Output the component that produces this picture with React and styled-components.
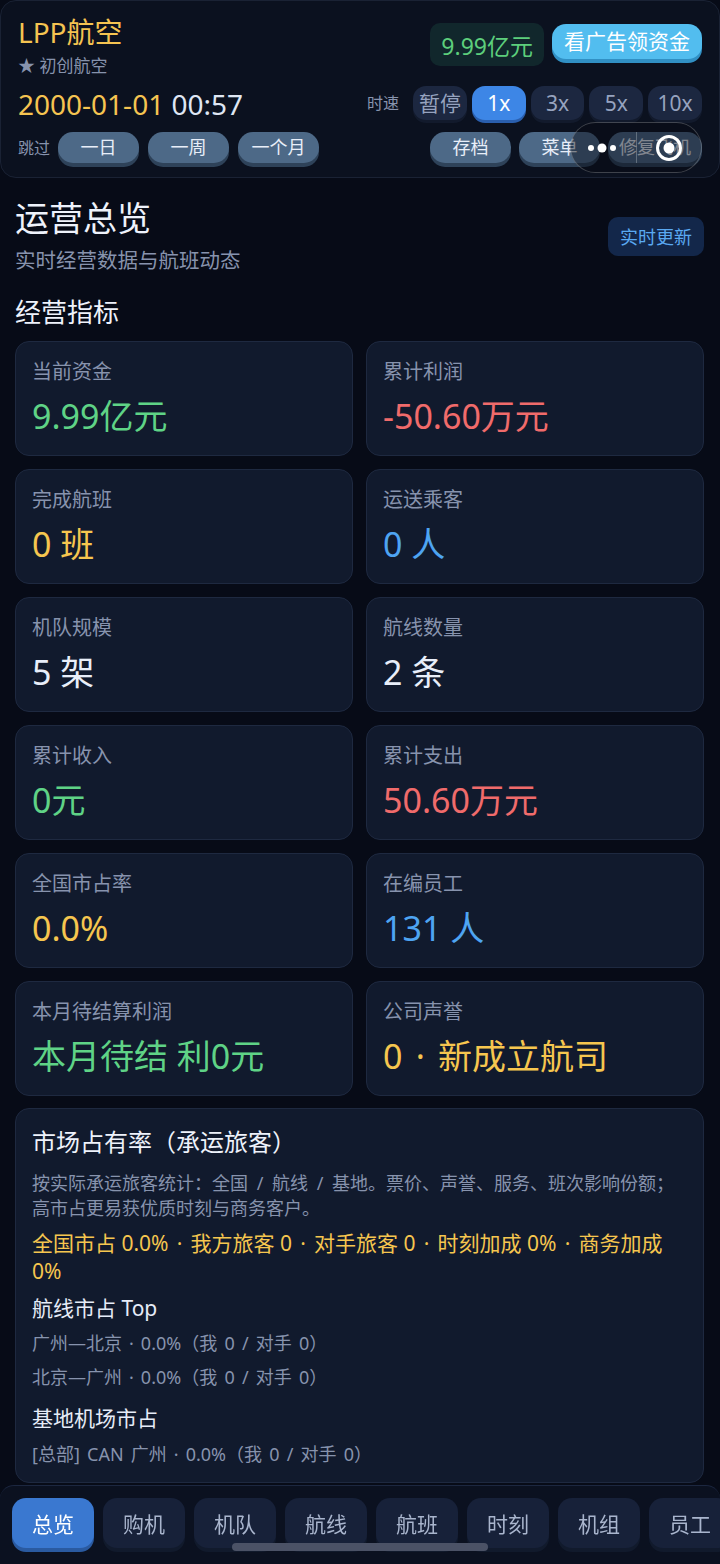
import React from 'react';
import styled, { createGlobalStyle } from 'styled-components';

const GlobalStyle = createGlobalStyle`
  html, body { margin: 0; padding: 0; background: #070b17; }
  body {
    font-family: "Noto Sans", "Noto Sans CJK SC", sans-serif;
    color: #e6ecf8;
    -webkit-font-smoothing: antialiased;
  }
  * { box-sizing: border-box; }
`;

const tones = {
  green: '#5fd386',
  red: '#f06b6b',
  yellow: '#f6c64f',
  blue: '#4ea4f2',
  white: '#e8eef9',
};

const Page = styled.div`
  background: #070b17;
  min-height: 1564px;
  padding-bottom: 90px;
`;

const Sep = styled.span`
  margin: 0 0.39em;
`;

/* ---------- Header ---------- */
const Header = styled.header`
  display: flex;
  justify-content: space-between;
  padding: 14px 17px 14px 17px;
  background: #0b111f;
  border: 1px solid #1a2234;
  border-radius: 16px;
`;

const LeftCol = styled.div`
  display: flex;
  flex-direction: column;
`;

const Brand = styled.div`
  font-size: 28px;
  line-height: 34px;
  color: #f5c451;
`;

const Tier = styled.div`
  margin-top: 6px;
  font-size: 17px;
  line-height: 22px;
  color: #8793ad;
`;

const Clock = styled.div`
  margin-top: 10px;
  font-size: 28px;
  line-height: 34px;
  color: #f5c451;
  span { color: #dfe6f3; }
`;

const ControlRow = styled.div`
  display: flex;
  align-items: ${p => p.$align || 'center'};
  gap: ${p => p.$gap || 8}px;
  margin-top: ${p => p.$top || 0}px;
`;

const RowLabel = styled.span`
  font-size: 16px;
  line-height: 22px;
  color: #8793ad;
  margin-right: ${p => p.$space || 0}px;
`;

const SlabButton = styled.button`
  min-width: 81px;
  height: 31px;
  padding: 0 11px;
  border: none;
  border-radius: 15px;
  background: #4d6987;
  color: #e8eef8;
  font-family: inherit;
  font-size: 18px;
  line-height: 31px;
  box-shadow: 0 4px 0 #2e4259;
  cursor: pointer;
`;

const RightCol = styled.div`
  display: flex;
  flex-direction: column;
  align-items: flex-end;
`;

const MoneyPill = styled.div`
  height: 43px;
  padding: 0 11px;
  display: flex;
  align-items: center;
  background: #11272c;
  color: #5dcf7c;
  font-size: 23px;
  border-radius: 10px;
`;

const AdButton = styled.button`
  height: 35px;
  margin-top: 1px;
  padding: 0 12px;
  border: none;
  border-radius: 14px;
  background: #52bdef;
  color: #ffffff;
  font-family: inherit;
  font-size: 21px;
  line-height: 35px;
  box-shadow: 0 4px 0 #3190c4;
`;

const SpeedGroup = styled.div`
  display: flex;
  gap: 5px;
  width: 289px;
`;

const SpeedButton = styled.button`
  flex: 1 1 0;
  height: 34px;
  padding: 0;
  border: none;
  border-radius: 13px;
  background: ${p => (p.$active ? '#3d86e6' : '#1c2740')};
  color: ${p => (p.$active ? '#ffffff' : '#96a3bf')};
  font-family: inherit;
  font-size: 21px;
  line-height: 34px;
  box-shadow: 0 3px 0 ${p => (p.$active ? '#2a5fae' : '#121a2c')};
`;

/* ---------- WeChat capsule overlay ---------- */
const Capsule = styled.div`
  position: fixed;
  top: 122px;
  right: 18px;
  width: 132px;
  height: 51px;
  border-radius: 26px;
  background: rgba(6, 9, 18, 0.45);
  border: 1px solid rgba(255, 255, 255, 0.22);
  display: flex;
  align-items: center;
`;

const CapsuleHalf = styled.div`
  flex: 1;
  height: 100%;
  display: flex;
  align-items: center;
  justify-content: center;
`;

const CapsuleDivider = styled.div`
  width: 1px;
  height: 31px;
  background: rgba(255, 255, 255, 0.25);
`;

/* ---------- Main ---------- */
const Main = styled.main`
  padding: 20px 16px 0 15px;
`;

const OverviewHead = styled.div`
  display: flex;
  justify-content: space-between;
  align-items: center;
`;

const PageTitle = styled.h1`
  margin: 0;
  font-size: 34px;
  line-height: 40px;
  font-weight: 400;
  color: #eef2fb;
`;

const PageSub = styled.div`
  margin-top: 8px;
  font-size: 20.5px;
  line-height: 28px;
  color: #8793ad;
`;

const LiveBadge = styled.div`
  height: 39px;
  padding: 0 12px;
  display: flex;
  align-items: center;
  border-radius: 10px;
  background: #13274a;
  color: #5aa9f2;
  font-size: 18px;
`;

const SectionTitle = styled.h2`
  margin: 21px 0 0;
  font-size: 26px;
  line-height: 34px;
  font-weight: 400;
  color: #eef2fb;
`;

const StatGrid = styled.div`
  margin-top: 12px;
  display: grid;
  grid-template-columns: 1fr 1fr;
  gap: 13px;
`;

const StatCard = styled.div`
  padding: 16px 16px 19px;
  background: #111a2d;
  border: 1px solid #1e2940;
  border-radius: 14px;
`;

const StatLabel = styled.div`
  font-size: 20px;
  line-height: 28px;
  color: #8793ad;
`;

const StatValue = styled.div`
  margin-top: 10px;
  font-size: 34px;
  line-height: 40px;
  color: ${p => tones[p.$tone]};
  white-space: nowrap;
`;

const MarketPanel = styled.section`
  margin-top: 12px;
  padding: 17px 16px 11px;
  background: #111a2d;
  border: 1px solid #1e2940;
  border-radius: 14px;
`;

const PanelTitle = styled.div`
  font-size: 24px;
  line-height: 32px;
  color: #eef2fb;
`;

const PanelNote = styled.p`
  margin: 13px 0 0;
  font-size: 18px;
  line-height: 25px;
  word-spacing: 4px;
  color: #8793ad;
`;

const Highlight = styled.div`
  margin-top: 9px;
  font-size: 21px;
  line-height: 27.5px;
  color: #f6c64f;
`;

const SubHead = styled.div`
  margin-top: ${p => p.$top || 9}px;
  font-size: 21px;
  line-height: 28px;
  color: #e6ecf8;
`;

const ShareList = styled.div`
  margin-top: ${p => p.$top || 4}px;
  display: flex;
  flex-direction: column;
`;

const ShareLine = styled.div`
  font-size: 18px;
  line-height: 34px;
  word-spacing: 2.5px;
  color: #8793ad;
`;

/* ---------- Bottom tabs ---------- */
const TabBar = styled.nav`
  position: fixed;
  left: 0;
  right: 0;
  bottom: 0;
  height: 79px;
  padding: 12px 12px 0;
  display: flex;
  gap: 9px;
  overflow: hidden;
  background: #0b1120;
  border-top: 1px solid #1c2740;
  border-radius: 14px 14px 0 0;
`;

const Tab = styled.div`
  flex: 0 0 82px;
  height: 50px;
  display: flex;
  align-items: center;
  justify-content: center;
  border-radius: 14px;
  font-size: 21px;
  background: ${p => (p.$active ? '#3a78d0' : '#172139')};
  color: ${p => (p.$active ? '#ffffff' : '#a9b5cd')};
  box-shadow: 0 4px 0 ${p => (p.$active ? '#2a5aa0' : '#111a2c')};
`;

const ScrollThumb = styled.div`
  position: absolute;
  left: 232px;
  bottom: 13px;
  width: 256px;
  height: 8px;
  border-radius: 4px;
  background: #4b5266;
`;

const dotted = parts =>
  parts.map((p, i) => (
    <React.Fragment key={i}>
      {i > 0 && <Sep>·</Sep>}
      {p}
    </React.Fragment>
  ));

const stats = [
  { label: '当前资金', value: ['9.99亿元'], tone: 'green' },
  { label: '累计利润', value: ['-50.60万元'], tone: 'red' },
  { label: '完成航班', value: ['0 班'], tone: 'yellow' },
  { label: '运送乘客', value: ['0 人'], tone: 'blue' },
  { label: '机队规模', value: ['5 架'], tone: 'white' },
  { label: '航线数量', value: ['2 条'], tone: 'white' },
  { label: '累计收入', value: ['0元'], tone: 'green' },
  { label: '累计支出', value: ['50.60万元'], tone: 'red' },
  { label: '全国市占率', value: ['0.0%'], tone: 'yellow' },
  { label: '在编员工', value: ['131 人'], tone: 'blue' },
  { label: '本月待结算利润', value: ['本月待结 利0元'], tone: 'green' },
  { label: '公司声誉', value: ['0', '新成立航司'], tone: 'yellow' },
];

const routes = [
  ['广州—北京', '0.0%（我 0 / 对手 0）'],
  ['北京—广州', '0.0%（我 0 / 对手 0）'],
];

const tabs = ['总览', '购机', '机队', '航线', '航班', '时刻', '机组', '员工'];
const speeds = ['暂停', '1x', '3x', '5x', '10x'];

export default function App() {
  return (
    <Page>
      <GlobalStyle />
      <Header>
        <LeftCol>
          <Brand>LPP航空</Brand>
          <Tier>★ 初创航空</Tier>
          <Clock>2000-01-01 <span>00:57</span></Clock>
          <ControlRow $top={11} $gap={9}>
            <RowLabel $space={-1}>跳过</RowLabel>
            <SlabButton>一日</SlabButton>
            <SlabButton>一周</SlabButton>
            <SlabButton>一个月</SlabButton>
          </ControlRow>
        </LeftCol>
        <RightCol>
          <ControlRow $top={8} $gap={8} $align="flex-start">
            <MoneyPill>9.99亿元</MoneyPill>
            <AdButton>看广告领资金</AdButton>
          </ControlRow>
          <ControlRow $top={20} $gap={5}>
            <RowLabel $space={9}>时速</RowLabel>
            <SpeedGroup>
              {speeds.map(s => (
                <SpeedButton key={s} $active={s === '1x'}>{s}</SpeedButton>
              ))}
            </SpeedGroup>
          </ControlRow>
          <ControlRow $top={12} $gap={8}>
            <SlabButton>存档</SlabButton>
            <SlabButton>菜单</SlabButton>
            <SlabButton>修复飞机</SlabButton>
          </ControlRow>
        </RightCol>
      </Header>

      <Capsule>
        <CapsuleHalf>
          <svg width="40" height="12" viewBox="0 0 40 12">
            <circle cx="8" cy="6" r="3" fill="#fff" />
            <circle cx="19" cy="6" r="4.5" fill="#fff" />
            <circle cx="30" cy="6" r="3" fill="#fff" />
          </svg>
        </CapsuleHalf>
        <CapsuleDivider />
        <CapsuleHalf>
          <svg width="28" height="28" viewBox="0 0 28 28">
            <circle cx="14" cy="14" r="11.5" fill="none" stroke="#fff" strokeWidth="3" />
            <circle cx="14" cy="14" r="5.5" fill="#fff" />
          </svg>
        </CapsuleHalf>
      </Capsule>

      <Main>
        <OverviewHead>
          <div>
            <PageTitle>运营总览</PageTitle>
            <PageSub>实时经营数据与航班动态</PageSub>
          </div>
          <LiveBadge>实时更新</LiveBadge>
        </OverviewHead>

        <SectionTitle>经营指标</SectionTitle>
        <StatGrid>
          {stats.map(s => (
            <StatCard key={s.label}>
              <StatLabel>{s.label}</StatLabel>
              <StatValue $tone={s.tone}>{dotted(s.value)}</StatValue>
            </StatCard>
          ))}
        </StatGrid>

        <MarketPanel>
          <PanelTitle>市场占有率（承运旅客）</PanelTitle>
          <PanelNote>
            按实际承运旅客统计：全国 / 航线 / 基地。票价、声誉、服务、班次影响份额；高市占更易获优质时刻与商务客户。
          </PanelNote>
          <Highlight>
            {dotted(['全国市占 0.0%', '我方旅客 0', '对手旅客 0', '时刻加成 0%', '商务加成'])} <span>0%</span>
          </Highlight>
          <SubHead $top={9}>航线市占 Top</SubHead>
          <ShareList $top={4}>
            {routes.map(r => (
              <ShareLine key={r[0]}>{dotted(r)}</ShareLine>
            ))}
          </ShareList>
          <SubHead $top={10}>基地机场市占</SubHead>
          <ShareList $top={5}>
            <ShareLine>{dotted(['[总部] CAN 广州', '0.0%（我 0 / 对手 0）'])}</ShareLine>
          </ShareList>
        </MarketPanel>
      </Main>

      <TabBar>
        {tabs.map(t => (
          <Tab key={t} $active={t === '总览'}>{t}</Tab>
        ))}
        <ScrollThumb />
      </TabBar>
    </Page>
  );
}
